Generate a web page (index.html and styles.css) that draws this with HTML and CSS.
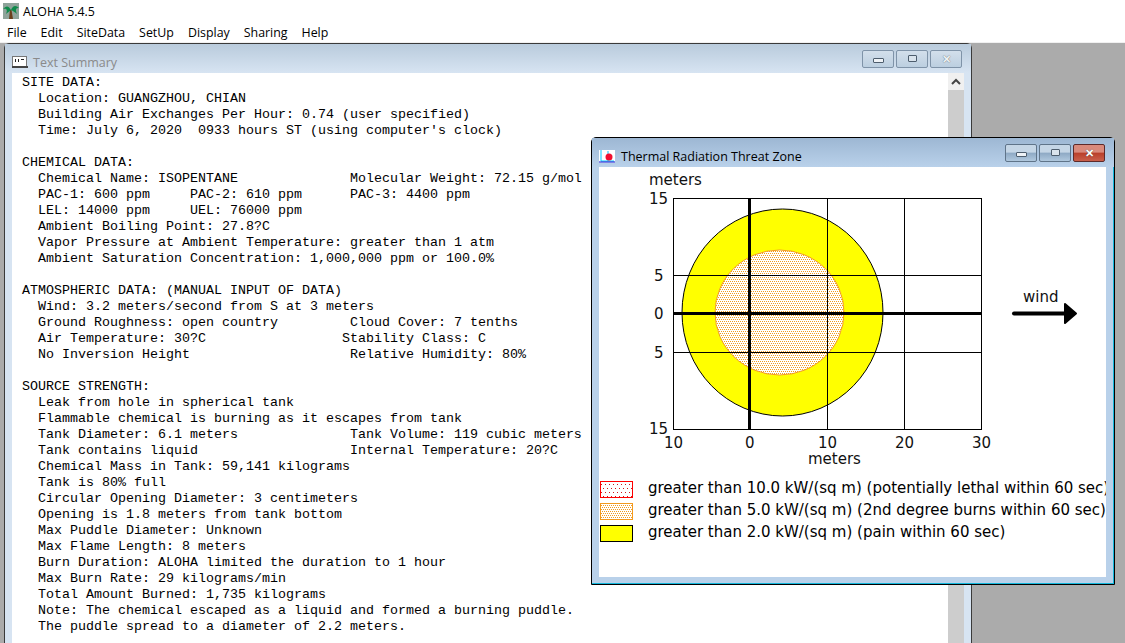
FILE: index.html
```html
<!DOCTYPE html>
<html lang="en">
<head>
  <meta charset="UTF-8">
  <meta name="viewport" content="width=device-width, initial-scale=1.0">
  <title>ALOHA 5.4.5</title>
  <link rel="stylesheet" href="styles.css">
</head>
<body>
  <div class="app">
    <div class="app-title">
      <svg class="palm" width="16" height="16" viewBox="0 0 16 16">
        <rect width="16" height="16" fill="#8fa39a"/>
        <path d="M7 7 L6 16 H10 L8.5 7 Z" fill="#6b3f1c"/>
        <path d="M8 7 C5 2 3 3 0 6 C3 5 5 6 3 11 C5 9 7 8 8 7 Z" fill="#0e8a4a"/>
        <path d="M8 7 C10 2 13 2 16 5 C13 5 12 6 14 11 C12 9 10 8 8 7 Z" fill="#0e8a4a"/>
      </svg>
      <span>ALOHA 5.4.5</span>
    </div>
    <div class="menubar">
      <span>File</span><span>Edit</span><span>SiteData</span><span>SetUp</span><span>Display</span><span>Sharing</span><span>Help</span>
    </div>
    <div class="desktop">

      <div class="window summary">
        <div class="win-title inactive">
          <svg class="win-icon" width="16" height="14" viewBox="0 0 16 14">
            <rect x="0.5" y="1.5" width="14" height="10" fill="#fff" stroke="#777"/>
            <rect x="0" y="11" width="16" height="2" fill="#444"/>
            <path d="M3 4h1v3h-1zM6 4h1v3h-1zM9 4h3v1h-3z" fill="#222"/>
          </svg>
          <span class="win-name">Text Summary</span>
          <div class="win-buttons">
            <div class="wbtn"><i class="glyph-min"></i></div>
            <div class="wbtn"><i class="glyph-max"></i></div>
            <div class="wbtn close-off">&#10005;</div>
          </div>
        </div>
        <div class="win-body">
<pre class="report">SITE DATA:
  Location: GUANGZHOU, CHIAN
  Building Air Exchanges Per Hour: 0.74 (user specified)
  Time: July 6, 2020  0933 hours ST (using computer's clock)

CHEMICAL DATA:
  Chemical Name: ISOPENTANE              Molecular Weight: 72.15 g/mol
  PAC-1: 600 ppm     PAC-2: 610 ppm      PAC-3: 4400 ppm
  LEL: 14000 ppm     UEL: 76000 ppm
  Ambient Boiling Point: 27.8?C
  Vapor Pressure at Ambient Temperature: greater than 1 atm
  Ambient Saturation Concentration: 1,000,000 ppm or 100.0%

ATMOSPHERIC DATA: (MANUAL INPUT OF DATA)
  Wind: 3.2 meters/second from S at 3 meters
  Ground Roughness: open country         Cloud Cover: 7 tenths
  Air Temperature: 30?C                 Stability Class: C
  No Inversion Height                    Relative Humidity: 80%

SOURCE STRENGTH:
  Leak from hole in spherical tank
  Flammable chemical is burning as it escapes from tank
  Tank Diameter: 6.1 meters              Tank Volume: 119 cubic meters
  Tank contains liquid                   Internal Temperature: 20?C
  Chemical Mass in Tank: 59,141 kilograms
  Tank is 80% full
  Circular Opening Diameter: 3 centimeters
  Opening is 1.8 meters from tank bottom
  Max Puddle Diameter: Unknown
  Max Flame Length: 8 meters
  Burn Duration: ALOHA limited the duration to 1 hour
  Max Burn Rate: 29 kilograms/min
  Total Amount Burned: 1,735 kilograms
  Note: The chemical escaped as a liquid and formed a burning puddle.
  The puddle spread to a diameter of 2.2 meters.</pre>
          <div class="scrollbar">
            <div class="scroll-up"><svg width="10" height="7" viewBox="0 0 10 7"><path d="M1 6 L5 2 L9 6" fill="none" stroke="#444" stroke-width="2"/></svg></div>
          </div>
        </div>
      </div>

      <div class="window threat">
        <div class="win-title">
          <svg class="win-icon" width="16" height="13" viewBox="0 0 16 13">
            <rect width="16" height="13" fill="#fff"/>
            <path d="M2 0V11H15" fill="none" stroke="#0cf" stroke-width="1"/>
            <path d="M0 12H16" stroke="#00c" stroke-width="1"/>
            <path d="M9 1V11" stroke="#0cf"/>
            <circle cx="10" cy="7" r="3.5" fill="#f01030"/>
          </svg>
          <span class="win-name">Thermal Radiation Threat Zone</span>
          <div class="win-buttons">
            <div class="wbtn on"><i class="glyph-min"></i></div>
            <div class="wbtn on"><i class="glyph-max"></i></div>
            <div class="wbtn close-on">&#10005;</div>
          </div>
        </div>
        <div class="threat-body">
          <svg class="chart" width="507" height="305" viewBox="0 0 507 305" shape-rendering="crispEdges">
            <defs>
              <pattern id="dots" width="4" height="4" patternUnits="userSpaceOnUse">
                <rect width="4" height="4" fill="#fff"/>
                <rect width="1" height="1" fill="#f39a1e"/>
                <rect x="2" width="1" height="1" fill="#f39a1e"/>
                <rect x="1" y="2" width="1" height="1" fill="#f39a1e"/>
                <rect x="3" y="2" width="1" height="1" fill="#f39a1e"/>
              </pattern>
              <pattern id="red-dots" width="8" height="8" patternUnits="userSpaceOnUse">
                <rect width="8" height="8" fill="#fff"/>
                <rect x="1" y="3" width="1" height="1" fill="#d01818"/>
                <rect x="5" y="3" width="1" height="1" fill="#d01818"/>
                <rect x="3" y="7" width="1" height="1" fill="#d01818"/>
                <rect x="7" y="7" width="1" height="1" fill="#d01818"/>
              </pattern>
            </defs>
            <ellipse class="smooth" cx="183.5" cy="145.5" rx="100.5" ry="103.5" fill="#ff0" stroke="#000"/>
            <ellipse class="smooth" cx="180.5" cy="145.5" rx="64.5" ry="62.5" fill="url(#dots)" stroke="#f39a1e"/>
            <g stroke="#000" fill="none">
              <rect x="74.5" y="31.5" width="308" height="231"/>
              <path d="M228.5 31.5V262.5M305.5 31.5V262.5M74.5 108.5H382.5M74.5 185.5H382.5"/>
              <path d="M150.5 31.5V262.5M74.5 146H382.5" stroke-width="3"/>
            </g>
            <g class="chart-text">
              <text x="50" y="18">meters</text>
              <text x="50" y="37">15</text>
              <text x="55" y="114">5</text>
              <text x="55" y="152">0</text>
              <text x="55" y="191">5</text>
              <text x="50" y="267">15</text>
              <text x="65" y="281">10</text>
              <text x="146" y="281">0</text>
              <text x="219" y="281">10</text>
              <text x="296" y="281">20</text>
              <text x="373" y="281">30</text>
              <text x="209" y="297">meters</text>
              <text x="424" y="135">wind</text>
            </g>
            <path class="smooth" d="M415 146.5H470" stroke="#000" stroke-width="4" stroke-linecap="round"/>
            <path class="smooth" d="M466 137L477 146.5L466 156Z" fill="#000" stroke="#000" stroke-linejoin="round" stroke-width="2"/>
          </svg>
          <div class="legend">
            <div class="legend-row">
              <svg class="swatch" width="33" height="17" viewBox="0 0 33 17" shape-rendering="crispEdges"><rect x="0.5" y="0.5" width="32" height="16" fill="url(#red-dots)" stroke="#f00"/></svg>
              <span>greater than 10.0 kW/(sq m) (potentially lethal within 60 sec)</span>
            </div>
            <div class="legend-row">
              <svg class="swatch" width="33" height="17" viewBox="0 0 33 17" shape-rendering="crispEdges"><rect x="0.5" y="0.5" width="32" height="16" fill="url(#dots)" stroke="#f39a1e"/></svg>
              <span>greater than 5.0 kW/(sq m) (2nd degree burns within 60 sec)</span>
            </div>
            <div class="legend-row">
              <svg class="swatch" width="33" height="17" viewBox="0 0 33 17" shape-rendering="crispEdges"><rect x="0.5" y="0.5" width="32" height="16" fill="#ff0" stroke="#000"/></svg>
              <span>greater than 2.0 kW/(sq m) (pain within 60 sec)</span>
            </div>
          </div>
        </div>
      </div>

    </div>
  </div>
</body>
</html>
```

FILE: styles.css
```css
body {
  margin: 0;
  background-color: #fff;
  font-family: "Open Sans", "Noto Sans", sans-serif;
  color: #000;
}

.app {
  width: 1125px;
  height: 643px;
  display: flex;
  flex-direction: column;
  overflow: hidden;
}

.app-title {
  height: 22px;
  display: flex;
  align-items: center;
  gap: 4px;
  padding-left: 3px;
  font-size: 12.4px;
}

.menubar {
  height: 20px;
  display: flex;
  align-items: center;
  gap: 14px;
  padding-left: 7px;
  font-size: 12.4px;
}

.desktop {
  flex: 1;
  position: relative;
  background-color: #ababab;
  border-top: 1px solid #f0f0f0;
  overflow: hidden;
}

.window {
  position: absolute;
  box-sizing: border-box;
  display: flex;
  flex-direction: column;
  border: 1px solid #3a3a3a;
  border-radius: 5px 5px 0 0;
}

.summary {
  left: 4px;
  top: 0;
  width: 968px;
  height: 640px;
  background-color: #d7e4f2;
  padding: 0 7px;
}

.threat {
  left: 591px;
  top: 94px;
  width: 524px;
  height: 448px;
  background-color: #b9d1ea;
  padding: 0 8px 7px 7px;
  border-color: #000;
  box-shadow: inset -1px -1px 0 #12b8dc;
}

.win-title {
  height: 29px;
  box-sizing: border-box;
  margin: 0 -7px;
  padding: 7px 9px 0 7px;
  display: flex;
  align-items: center;
  gap: 5px;
  font-size: 12.5px;
  background: linear-gradient(#9db7d3, #b9d1ea);
}

.threat .win-title {
  margin-right: -8px;
  padding-right: 9px;
  gap: 6px;
}

.win-title.inactive {
  background: linear-gradient(#b9cbdc, #d7e4f2);
  color: #8a8a8a;
}

.win-buttons {
  margin-left: auto;
  display: flex;
  gap: 2px;
  margin-top: -7px;
}

.wbtn {
  width: 32px;
  height: 18px;
  box-sizing: border-box;
  border: 1px solid #7f93a8;
  border-radius: 2px;
  display: flex;
  align-items: center;
  justify-content: center;
  background: linear-gradient(#d3dfeb, #bccfe0);
  font-size: 11px;
  font-weight: bold;
}

.wbtn.on {
  border-color: #5f7489;
  background: linear-gradient(#c5d6e6 45%, #8ea9c4 50%, #b0c8de);
}

.close-off {
  color: #eef2f6;
  text-shadow: 0 0 1px #444;
}

.close-on {
  border-color: #5d2a2a;
  color: #fff;
  text-shadow: 0 0 1px #333;
  background: linear-gradient(#d98a7c 45%, #b93f2a 50%, #c9604c);
}

.glyph-min {
  display: block;
  width: 9px;
  height: 3px;
  margin-top: 4px;
  background-color: #eef2f6;
  border: 1px solid #4d5d6d;
  border-radius: 1px;
}

.glyph-max {
  display: block;
  width: 7px;
  height: 5px;
  background-color: #d9e3ec;
  border: 1px solid #4d5d6d;
  border-radius: 1px;
}

.win-body {
  flex: 1;
  display: flex;
  background-color: #fff;
  min-height: 0;
}

.report {
  flex: 1;
  margin: 0;
  padding: 2px 0 0 10px;
  font-family: "Liberation Mono", monospace;
  font-size: 13.33px;
  line-height: 16px;
  color: #000;
  overflow: hidden;
}

.scrollbar {
  width: 16px;
  background-color: #cdcdcd;
}

.scroll-up {
  height: 17px;
  background-color: #f0f0f0;
  display: flex;
  align-items: center;
  justify-content: center;
}

.threat-body {
  flex: 1;
  background-color: #fff;
  overflow: hidden;
  min-height: 0;
}

.chart {
  display: block;
}

.smooth {
  shape-rendering: auto;
}

.chart-text {
  font-family: "DejaVu Sans", sans-serif;
  font-size: 15px;
  fill: #111;
}

.legend {
  margin-top: 9px;
  padding-left: 1px;
  display: flex;
  flex-direction: column;
  gap: 5px;
}

.legend-row {
  display: flex;
  align-items: center;
  gap: 15px;
  height: 17px;
  font-family: "DejaVu Sans", sans-serif;
  font-size: 15px;
  white-space: nowrap;
}

.legend-row span {
  margin-top: -4px;
}

.swatch {
  flex: none;
  display: block;
}
```
